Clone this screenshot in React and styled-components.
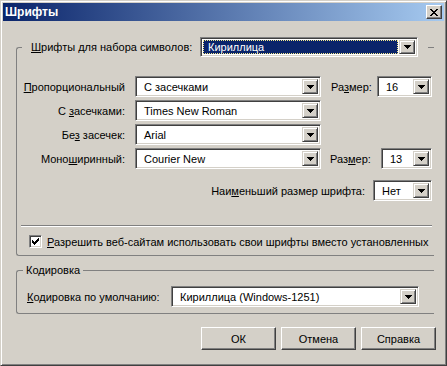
import React from "react";
import styled, { createGlobalStyle } from "styled-components";

const GlobalStyle = createGlobalStyle`
  body {
    margin: 0;
    background: #d4d0c8;
    font-family: "Liberation Sans", Arial, sans-serif;
    font-size: 11px;
    color: #000;
  }
`;

const Window = styled.div`
  width: 447px;
  height: 366px;
  box-sizing: border-box;
  background: #d4d0c8;
  border: 1px solid;
  border-color: #d4d0c8 #404040 #404040 #d4d0c8;
  box-shadow: inset 1px 1px #fff, inset -1px -1px #808080;
  padding: 2px;
  display: flex;
  flex-direction: column;
`;

const TitleBar = styled.div`
  height: 18px;
  display: flex;
  align-items: center;
  justify-content: space-between;
  padding: 0 2px 0 2px;
  background: linear-gradient(to right, #0a246a, #a6caf0);
`;

const Title = styled.span`
  color: #fff;
  font-weight: bold;
  font-size: 12px;
`;

const CloseButton = styled.div`
  width: 16px;
  height: 14px;
  box-sizing: border-box;
  background: #d4d0c8;
  border: 1px solid;
  border-color: #fff #404040 #404040 #fff;
  box-shadow: inset -1px -1px #808080;
  display: flex;
  align-items: center;
  justify-content: center;
`;

const Body = styled.div`
  flex: 1;
  display: flex;
  flex-direction: column;
  padding: 0 8px 0 13px;
`;

const Group = styled.fieldset`
  margin: ${(p) => p.$top}px 0 0 0;
  padding: 0;
  width: 418px;
  box-sizing: border-box;
  border: 1px solid #808080;
  border-right: none;
  border-radius: 3px 0 0 3px;
  min-inline-size: 0;
`;

const Legend = styled.legend`
  margin-left: ${(p) => p.$ml}px;
  padding: ${(p) => p.$pad};
  display: flex;
  align-items: center;
`;

const LegendLabel = styled.span`
  width: 169px;
`;

const GroupContent = styled.div`
  padding: ${(p) => p.$pad};
  display: flex;
  flex-direction: column;
`;

const Row = styled.div`
  display: flex;
  align-items: center;
  height: 21px;
  margin-top: ${(p) => p.$mt || 0}px;
  justify-content: ${(p) => (p.$end ? "flex-end" : "flex-start")};
`;

const Label = styled.span`
  width: ${(p) => p.$w}px;
  flex: 0 0 auto;
  text-align: ${(p) => (p.$right ? "right" : "left")};
  margin-right: ${(p) => p.$mr || 0}px;
  margin-left: ${(p) => p.$ml || 0}px;
  white-space: nowrap;
`;

const U = styled.span`
  text-decoration: underline;
`;

const Combo = styled.div`
  width: ${(p) => p.$w}px;
  height: ${(p) => p.$h || 21}px;
  flex: 0 0 auto;
  box-sizing: border-box;
  margin-left: ${(p) => p.$ml || 0}px;
  background: #fff;
  border: 1px solid;
  border-color: #808080 #fff #fff #808080;
  box-shadow: inset 1px 1px #404040, inset -1px -1px #d4d0c8;
  padding: 2px;
  display: flex;
`;

const ComboText = styled.div`
  flex: 1;
  display: flex;
  align-items: center;
  padding-left: ${(p) => (p.$focus ? 4 : 5)}px;
  box-sizing: border-box;
  white-space: nowrap;
  overflow: hidden;
  background: ${(p) => (p.$focus ? "#0a246a" : "#fff")};
  color: ${(p) => (p.$focus ? "#fff" : "#000")};
  border: 1px dotted ${(p) => (p.$focus ? "#f4e98c" : "transparent")};
  margin-right: 1px;
`;

const DropButton = styled.div`
  width: 16px;
  flex: 0 0 auto;
  box-sizing: border-box;
  background: #d4d0c8;
  border: 1px solid;
  border-color: #d4d0c8 #404040 #404040 #d4d0c8;
  box-shadow: inset 1px 1px #fff, inset -1px -1px #808080;
  display: flex;
  align-items: center;
  justify-content: center;
`;

const Separator = styled.div`
  height: 1px;
  margin: 24px 0 0 4px;
  background: #808080;
  border-bottom: 1px solid #fff;
`;

const CheckRow = styled.div`
  display: flex;
  align-items: center;
  margin: 8px 0 0 12px;
  height: 13px;
`;

const CheckBox = styled.div`
  width: 13px;
  height: 13px;
  box-sizing: border-box;
  background: #fff;
  border: 1px solid;
  border-color: #808080 #fff #fff #808080;
  box-shadow: inset 1px 1px #404040, inset -1px -1px #d4d0c8;
  display: flex;
  align-items: center;
  justify-content: center;
  margin-right: 5px;
`;

const ButtonRow = styled.div`
  display: flex;
  justify-content: flex-end;
  gap: 5px;
  margin-top: 13px;
`;

const Button = styled.div`
  width: 75px;
  height: 23px;
  box-sizing: border-box;
  background: #d4d0c8;
  border: 1px solid;
  border-color: #fff #404040 #404040 #fff;
  box-shadow: inset -1px -1px #808080;
  display: flex;
  align-items: center;
  justify-content: center;
`;

const Arrow = () => (
  <svg width="7" height="4" viewBox="0 0 7 4">
    <path d="M0 0h7v1H0zM1 1h5v1H1zM2 2h3v1H2zM3 3h1v1H3z" fill="#000" />
  </svg>
);

const Select = ({ w, ml, h, focus, children }) => (
  <Combo $w={w} $ml={ml} $h={h}>
    <ComboText $focus={focus}>{children}</ComboText>
    <DropButton>
      <Arrow />
    </DropButton>
  </Combo>
);

export default function App() {
  return (
    <>
      <GlobalStyle />
      <Window>
        <TitleBar>
          <Title>Шрифты</Title>
          <CloseButton>
            <svg width="8" height="7" viewBox="0 0 8 7">
              <path
                d="M0 0h2v1H0zM1 1h2v1H1zM2 2h4v1H2zM3 3h2v1H3zM2 4h4v1H2zM1 5h2v1H1zM0 6h2v1H0zM6 0h2v1H6zM5 1h2v1H5zM5 5h2v1H5zM6 6h2v1H6z"
                fill="#000"
              />
            </svg>
          </CloseButton>
        </TitleBar>
        <Body>
          <Group $top={16}>
            <Legend $ml={5} $pad="0 10px 0 9px">
              <LegendLabel>
                <U>Ш</U>рифты для набора символов:
              </LegendLabel>
              <Select w={218} h={20} focus>
                Кириллица
              </Select>
            </Legend>
            <GroupContent $pad="19px 2px 7px 0">
              <Row>
                <Label $w={108} $right $mr={10}>
                  <U>П</U>ропорциональный
                </Label>
                <Select w={186}>С засечками</Select>
                <Label $w={41} $ml={10}>
                  Ра<U>з</U>мер:
                </Label>
                <Select w={55} ml={5}>
                  16
                </Select>
              </Row>
              <Row $mt={3}>
                <Label $w={108} $right $mr={10}>
                  С <U>з</U>асечками:
                </Label>
                <Select w={186}>Times New Roman</Select>
              </Row>
              <Row $mt={3}>
                <Label $w={108} $right $mr={10}>
                  Бе<U>з</U> засечек:
                </Label>
                <Select w={186}>Arial</Select>
              </Row>
              <Row $mt={3}>
                <Label $w={108} $right $mr={10}>
                  Моно<U>ш</U>иринный:
                </Label>
                <Select w={186}>Courier New</Select>
                <Label $w={41} $ml={9}>
                  Раз<U>м</U>ер:
                </Label>
                <Select w={51} ml={10}>
                  13
                </Select>
              </Row>
              <Row $mt={11} $end>
                <Label $mr={8}>
                  Наи<U>м</U>еньший размер шрифта:
                </Label>
                <Select w={59}>Нет</Select>
              </Row>
              <Separator />
              <CheckRow>
                <CheckBox>
                  <svg width="7" height="7" viewBox="0 0 7 7">
                    <path
                      d="M6 0h1v3H6zM5 1h1v3H5zM4 2h1v3H4zM3 3h1v3H3zM2 4h1v3H2zM1 3h1v3H1zM0 2h1v3H0z"
                      fill="#000"
                    />
                  </svg>
                </CheckBox>
                <span>
                  <U>Р</U>азрешить веб-сайтам использовать свои шрифты вместо
                  установленных
                </span>
              </CheckRow>
            </GroupContent>
          </Group>
          <Group $top={8}>
            <Legend $ml={6} $pad="0 3px">
              Кодировка
            </Legend>
            <GroupContent $pad="10px 2px 6px 10px">
              <Row>
                <Label $w={144}>
                  <U>К</U>одировка по умолчанию:
                </Label>
                <Select w={248}>Кириллица (Windows-1251)</Select>
              </Row>
            </GroupContent>
          </Group>
          <ButtonRow>
            <Button>ОК</Button>
            <Button>Отмена</Button>
            <Button>Справка</Button>
          </ButtonRow>
        </Body>
      </Window>
    </>
  );
}
